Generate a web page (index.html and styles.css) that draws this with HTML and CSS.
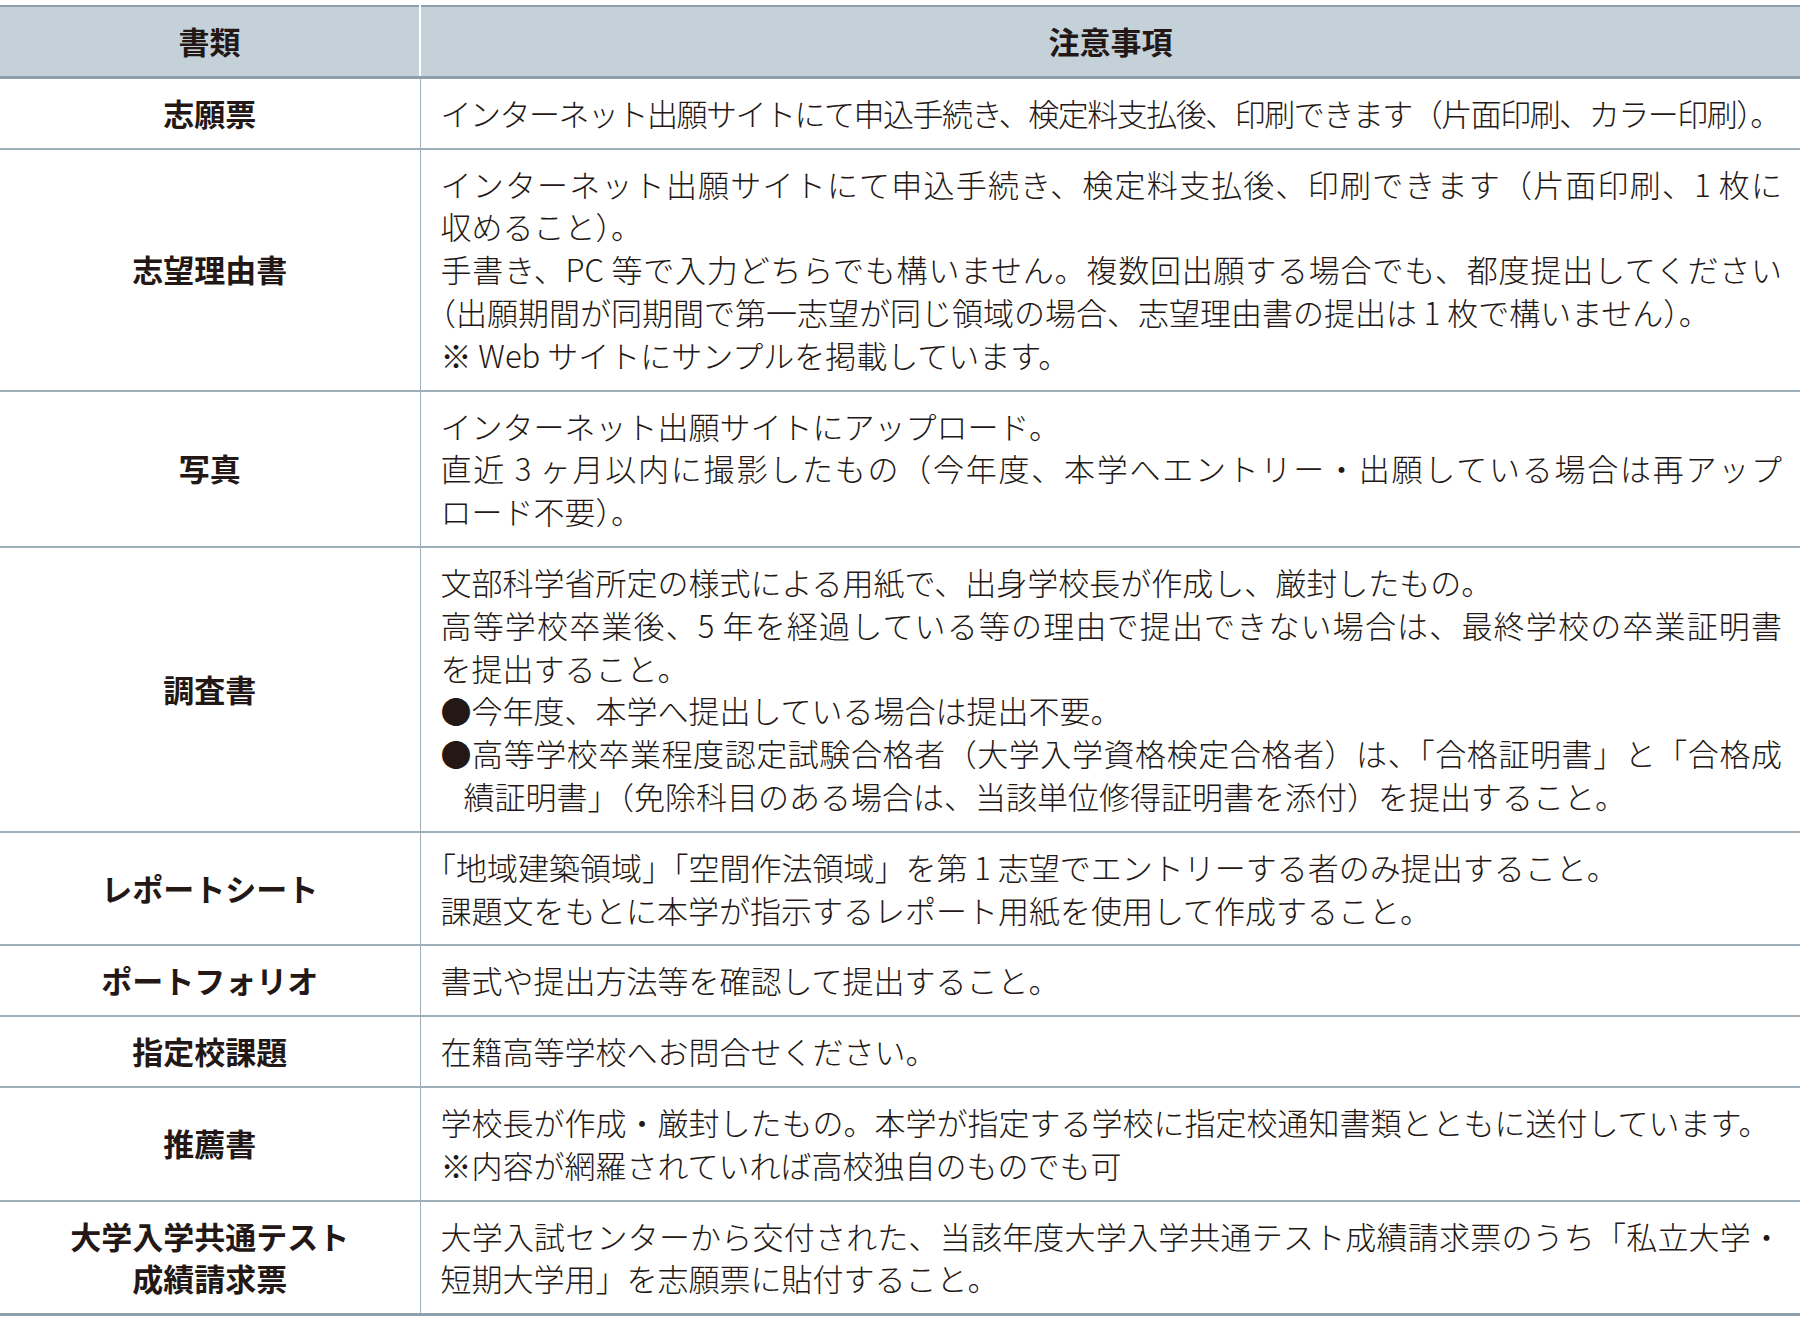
FILE: index.html
```html
<!DOCTYPE html>
<html lang="ja">
<head>
<meta charset="utf-8">
<title>提出書類</title>
<link rel="stylesheet" href="styles.css">
</head>
<body>
<div class="sheet">
<table class="docs">
  <colgroup>
    <col class="c-name">
    <col class="c-note">
  </colgroup>
  <thead>
    <tr>
      <th class="h-name">書類</th>
      <th class="h-note">注意事項</th>
    </tr>
  </thead>
  <tbody>
    <tr>
      <td class="name">志願票</td>
      <td class="note"><span class="ln tight">インターネット出願サイトにて申込手続き、検定料支払後、印刷できます（片面印刷、カラー印刷）。</span></td>
    </tr>
    <tr>
      <td class="name">志望理由書</td>
      <td class="note">
        <span class="ln full">インターネット出願サイトにて申込手続き、検定料支払後、印刷できます（片面印刷、1 枚に</span>
        <span class="ln">収めること）。</span>
        <span class="ln full">手書き、PC 等で入力どちらでも構いません。複数回出願する場合でも、都度提出してください</span>
        <span class="ln"><span class="hw">（</span>出願期間が同期間で第一志望が同じ領域の場合、志望理由書の提出は 1 枚で構いません）。</span>
        <span class="ln">※ Web サイトにサンプルを掲載しています。</span>
      </td>
    </tr>
    <tr>
      <td class="name">写真</td>
      <td class="note">
        <span class="ln">インターネット出願サイトにアップロード。</span>
        <span class="ln full">直近 3 ヶ月以内に撮影したもの（今年度、本学へエントリー・出願している場合は再アップ</span>
        <span class="ln">ロード不要）。</span>
      </td>
    </tr>
    <tr>
      <td class="name">調査書</td>
      <td class="note">
        <span class="ln">文部科学省所定の様式による用紙で、出身学校長が作成し、厳封したもの。</span>
        <span class="ln full">高等学校卒業後、5 年を経過している等の理由で提出できない場合は、最終学校の卒業証明書</span>
        <span class="ln">を提出すること。</span>
        <span class="ln">●今年度、本学へ提出している場合は提出不要。</span>
        <span class="ln full">●高等学校卒業程度認定試験合格者（大学入学資格検定合格者）は、「合格証明書」と「合格成</span>
        <span class="ln indent">績証明書」（免除科目のある場合は、当該単位修得証明書を添付）を提出すること。</span>
      </td>
    </tr>
    <tr>
      <td class="name">レポートシート</td>
      <td class="note">
        <span class="ln"><span class="hw">「</span>地域建築領域」「空間作法領域」を第 1 志望でエントリーする者のみ提出すること。</span>
        <span class="ln">課題文をもとに本学が指示するレポート用紙を使用して作成すること。</span>
      </td>
    </tr>
    <tr>
      <td class="name">ポートフォリオ</td>
      <td class="note"><span class="ln">書式や提出方法等を確認して提出すること。</span></td>
    </tr>
    <tr>
      <td class="name">指定校課題</td>
      <td class="note"><span class="ln">在籍高等学校へお問合せください。</span></td>
    </tr>
    <tr>
      <td class="name">推薦書</td>
      <td class="note">
        <span class="ln">学校長が作成・厳封したもの。本学が指定する学校に指定校通知書類とともに送付しています。</span>
        <span class="ln">※内容が網羅されていれば高校独自のものでも可</span>
      </td>
    </tr>
    <tr class="last">
      <td class="name">大学入学共通テスト<br>成績請求票</td>
      <td class="note">
        <span class="ln full">大学入試センターから交付された、当該年度大学入学共通テスト成績請求票のうち「私立大学・</span>
        <span class="ln">短期大学用」を志願票に貼付すること。</span>
      </td>
    </tr>
  </tbody>
</table>
</div>
</body>
</html>
```

FILE: styles.css
```css
html, body {
  margin: 0;
  padding: 0;
  background: #ffffff;
}

body {
  font-family: "Noto Sans CJK JP", "Noto Sans", sans-serif;
  color: #231815;
}

.sheet {
  padding-top: 5px;
}

.docs {
  width: 100%;
  border-collapse: collapse;
  table-layout: fixed;
  border-top: 2px solid #8d9fab;
  border-bottom: 3px solid #8d9fab;
}

.c-name {
  width: 420px;
}

.docs th {
  background: #c5d1d8;
  font-weight: 700;
  font-size: 31px;
  line-height: 42.8px;
  padding: 13px 0 13px 0;
  text-align: center;
  border-bottom: 3px solid #8d9fab;
}

.docs th.h-name {
  border-right: 2px solid #ffffff;
}

.docs td {
  border-bottom: 2px solid #9eafba;
  font-size: 31px;
  line-height: 42.8px;
}

.docs tr.last td {
  border-bottom: 3px solid #8d9fab;
}

.docs td.name {
  text-align: center;
  vertical-align: middle;
  font-weight: 700;
  padding: 13px 0;
  border-right: 1.5px solid #9eafba;
}

.docs td.note {
  font-weight: 300;
  padding: 13px 18px 13px 20px;
  vertical-align: top;
}

.ln {
  display: block;
  text-align: left;
}

.ln.full {
  text-align: justify;
  text-align-last: justify;
}

.ln.tight {
  letter-spacing: -1.5px;
}

.ln.indent {
  padding-left: 23px;
}

.hw {
  font-feature-settings: "halt";
}
```
